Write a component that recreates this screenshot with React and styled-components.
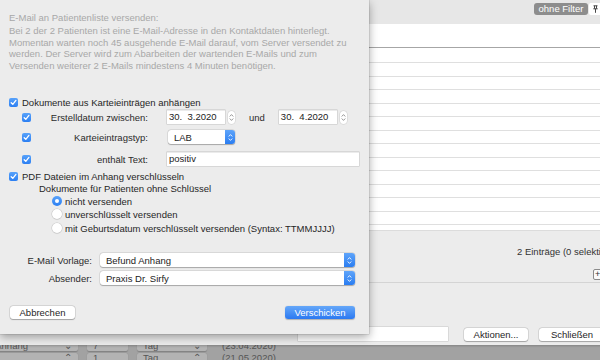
import React from 'react'
import styled, { createGlobalStyle } from 'styled-components'

const GlobalStyle = createGlobalStyle`
    html, body {
        margin: 0;
        padding: 0;
    }
    body {
        font-family: "Liberation Sans", Arial, sans-serif;
        font-size: 9.5px;
        color: #262626;
        background: #a2a2a2;
    }
`;

const Screen = styled.div`
    position: relative;
    width: 600px;
    height: 360px;
    overflow: hidden;
    background: #a2a2a2;
    display: flex;
    flex-direction: column;
`;

/* ---------- window behind the sheet ---------- */
const Window = styled.div`
    width: 640px;
    height: 345px;
    flex: none;
    background: #ececec;
    display: flex;
    flex-direction: column;
    box-shadow: 0 1px 2px rgba(0,0,0,0.2);
    position: relative;
    z-index: 1;
`;
const Toolbar = styled.div`
    height: 24px;
    flex: none;
    box-sizing: border-box;
    padding: 3px 0 0 534px;
    display: flex;
    align-items: flex-start;
    background: #e7e7e7;
`;
const FilterPill = styled.div`
    width: 54px;
    height: 12px;
    border-radius: 3px;
    background: #8d8d8d;
    color: #fff;
    line-height: 12px;
    text-align: center;
    margin-right: 1px;
`;
const PinButton = styled.div`
    width: 20px;
    height: 12px;
    border-radius: 2px;
    background: #fff;
    display: flex;
    align-items: center;
    padding-left: 4px;
    box-sizing: border-box;
`;
const Table = styled.div`
    height: 206px;
    flex: none;
    overflow: hidden;
    background: #fff;
    display: flex;
    flex-direction: column;
`;
const TableHead = styled.div`
    height: 24px;
    flex: none;
    box-sizing: border-box;
    border-bottom: 1px solid #a6a6a6;
`;
const TableRow = styled.div`
    height: ${({first}) => first ? 15 : 13.5}px;
    flex: none;
    box-sizing: border-box;
    border-bottom: 1px solid #dfdfdf;
`;
const StatusArea = styled.div`
    height: 53px;
    flex: none;
    box-sizing: border-box;
    border-top: 1px solid #dcdcdc;
    border-bottom: 1px solid #d4d4d4;
    padding: 15px 0 0 517px;
    display: flex;
    flex-direction: column;
    align-items: flex-start;
`;
const StatusText = styled.div`
    line-height: 11px;
    white-space: nowrap;
    color: #333;
`;
const PlusButton = styled.div`
    margin: 12px 0 0 76px;
    width: 14px;
    height: 9px;
    border: 1px solid #8a8a8a;
    border-radius: 2px;
    background: #fafafa;
    font-size: 9px;
    line-height: 9px;
    padding-left: 1px;
    color: #333;
`;
const ButtonBar = styled.div`
    flex: 1;
    display: flex;
    align-items: flex-end;
    padding: 0 0 4px 298px;
`;
const SearchField = styled.div`
    width: 150px;
    height: 14px;
    background: #fff;
    box-shadow: 0 0 0 0.5px #c6c6c6;
`;
const PushButton = styled.div`
    width: ${({w}) => w}px;
    height: 13px;
    margin-left: ${({gap}) => gap}px;
    border-radius: 3px;
    box-sizing: border-box;
    display: flex;
    align-items: center;
    justify-content: center;
    color: ${({primary}) => primary ? '#fff' : '#262626'};
    background: ${({primary}) => primary ? 'linear-gradient(#65a7f9, #2b79f1)' : '#fff'};
    box-shadow: ${({primary}) => primary ? '0 0.5px 1px rgba(0,0,0,0.25)' : '0 0 0 0.5px rgba(0,0,0,0.15), 0 0.5px 1px rgba(0,0,0,0.25)'};
    white-space: nowrap;
`;

/* ---------- window further below ---------- */
const LowerWindow = styled.div`
    flex: 1;
    display: flex;
    flex-direction: column;
    gap: 2px;
    margin-top: -4px;
    margin-left: -43px;
    overflow: hidden;
`;
const LowerRow = styled.div`
    display: flex;
    gap: 9px;
    height: 10px;
    flex: none;
`;
const LowerField = styled.div`
    width: ${({w}) => w}px;
    height: 10px;
    border-radius: 2px;
    background: ${({plain}) => plain ? 'transparent' : '#b3b3b3'};
    box-shadow: ${({plain}) => plain ? 'none' : '0 0.5px 1px rgba(0,0,0,0.2)'};
    color: #555;
    line-height: 10px;
    padding: 0 6px;
    box-sizing: border-box;
    white-space: nowrap;
    display: flex;
    justify-content: space-between;
`;

/* ---------- sheet ---------- */
const Sheet = styled.div`
    position: absolute;
    z-index: 2;
    top: 0;
    left: 0;
    width: 369px;
    height: 334px;
    box-sizing: border-box;
    padding: 12px 14px 0 9px;
    background: #ececec;
    box-shadow: 0 3px 9px rgba(0,0,0,0.35), 0 0 0 0.5px rgba(0,0,0,0.15);
    display: flex;
    flex-direction: column;
`;
const Info = styled.div`
    color: #a8a8a8;
    line-height: 11.4px;
    white-space: nowrap;
`;
const InfoTitle = styled.div`
    margin-bottom: 2px;
`;
const Row = styled.div`
    display: flex;
    align-items: center;
    flex: none;
    height: ${({h}) => h || 12}px;
    margin-top: ${({mt}) => mt || 0}px;
    padding-left: ${({indent}) => indent || 0}px;
    white-space: nowrap;
`;
const CheckBox = styled.span`
    width: 9px;
    height: 9px;
    flex: none;
    border-radius: 2px;
    background: linear-gradient(#58a2fa, #2c7ff2);
    display: flex;
    align-items: center;
    justify-content: center;
    margin-right: ${({gap}) => gap || 4}px;
`;
const Label = styled.span`
    width: ${({w}) => w}px;
    flex: none;
    text-align: right;
    color: #2b2b2b;
`;
const Field = styled.div`
    width: ${({w}) => w}px;
    height: 14px;
    margin-left: ${({ml}) => ml || 0}px;
    flex: none;
    box-sizing: border-box;
    padding-left: 2px;
    background: #fff;
    box-shadow: 0 0 0 0.5px #c2c2c2, inset 0 0.5px 0 #d8d8d8;
    line-height: 14px;
    color: #1c1c1c;
    white-space: pre;
`;
const Stepper = styled.div`
    width: 7px;
    height: 13px;
    margin-left: ${({ml}) => ml}px;
    flex: none;
    border-radius: 4px;
    background: #fff;
    box-shadow: 0 0 0 0.5px #cdcdcd;
    display: flex;
    align-items: center;
    justify-content: center;
`;
const Conj = styled.span`
    margin-left: 14px;
    color: #2b2b2b;
`;
const Popup = styled.div`
    width: ${({w}) => w}px;
    height: 14px;
    margin-left: ${({ml}) => ml || 0}px;
    flex: none;
    border-radius: 3px;
    background: #fff;
    box-shadow: 0 0 0 0.5px rgba(0,0,0,0.12), 0 0.5px 1px rgba(0,0,0,0.25);
    display: flex;
    align-items: center;
    overflow: hidden;
    color: #1c1c1c;
`;
const PopupText = styled.span`
    flex: 1;
    padding-left: ${({pad}) => pad || 6}px;
`;
const PopupArrows = styled.span`
    width: ${({w}) => w || 10}px;
    height: 14px;
    flex: none;
    background: linear-gradient(#5ea4fa, #2a7df1);
    display: flex;
    align-items: center;
    justify-content: center;
`;
const Radio = styled.span`
    width: 10px;
    height: 10px;
    flex: none;
    box-sizing: border-box;
    border-radius: 50%;
    margin-right: 3px;
    display: flex;
    align-items: center;
    justify-content: center;
    background: ${({checked}) => checked ? 'linear-gradient(#5aa3fa, #2b7ff2)' : '#fff'};
    box-shadow: ${({checked}) => checked ? 'none' : '0 0 0 0.5px #c4c4c4, 0 0.5px 1px rgba(0,0,0,0.15)'};
`;
const RadioDot = styled.span`
    width: 4px;
    height: 4px;
    border-radius: 50%;
    background: #fff;
`;
const Footer = styled.div`
    display: flex;
    justify-content: space-between;
    margin-top: 21px;
    padding-left: 1px;
`;

const Check = () => (
    <svg width="7" height="7" viewBox="0 0 7 7">
        <path d="M1.2 3.7 L2.8 5.3 L5.9 1.4" fill="none" stroke="#fff" strokeWidth="1.3" strokeLinecap="round" strokeLinejoin="round" />
    </svg>
)

const Arrows = ({color = '#fff'}) => (
    <svg width="5" height="9" viewBox="0 0 5 9">
        <path d="M1 3.2 L2.5 1.6 L4 3.2 M1 5.8 L2.5 7.4 L4 5.8" fill="none" stroke={color} strokeWidth="0.9" strokeLinecap="round" strokeLinejoin="round" />
    </svg>
)

const Pin = () => (
    <svg width="5" height="8" viewBox="0 0 5 8">
        <path d="M0.5 0.8 H4.5 M1.5 0.8 V3.6 M3.5 0.8 V3.6 M0.3 3.8 H4.7 M2.5 3.8 V7.8" fill="none" stroke="#333" strokeWidth="0.9" />
    </svg>
)

const CheckRow = ({label, children, mt, h}) => (
    <Row indent={13} mt={mt} h={h}>
        <CheckBox gap={0}><Check /></CheckBox>
        <Label w={113}>{label}</Label>
        {children}
    </Row>
)

const DateField = ({value, ml}) => (
    <>
        <Field w={58} ml={ml}>{value}</Field>
        <Stepper ml={3}><Arrows color="#8a8a8a" /></Stepper>
    </>
)

const SelectBox = ({value, w, ml, arrowW}) => (
    <Popup w={w} ml={ml}>
        <PopupText>{value}</PopupText>
        <PopupArrows w={arrowW}><Arrows /></PopupArrows>
    </Popup>
)

const rows = Array.from({length: 13})

export default function App() {
    return (
        <Screen>
            <GlobalStyle />
            <Window>
                <Toolbar>
                    <FilterPill>ohne Filter</FilterPill>
                    <PinButton><Pin /></PinButton>
                </Toolbar>
                <Table>
                    <TableHead />
                    {rows.map((_, i) => <TableRow key={i} first={i === 0} />)}
                </Table>
                <StatusArea>
                    <StatusText>2 Einträge (0 selektiert)</StatusText>
                    <PlusButton>+</PlusButton>
                </StatusArea>
                <ButtonBar>
                    <SearchField />
                    <PushButton w={64} gap={16}>Aktionen...</PushButton>
                    <PushButton w={66} gap={11}>Schließen</PushButton>
                </ButtonBar>
            </Window>
            <LowerWindow>
                <LowerRow>
                    <LowerField w={121}><span>Befund Anhang</span><span>⌄</span></LowerField>
                    <LowerField w={41}>7</LowerField>
                    <LowerField w={70}><span>Tag</span><span>⌄</span></LowerField>
                    <LowerField w={80} plain>(23.04.2020)</LowerField>
                </LowerRow>
                <LowerRow>
                    <LowerField w={121}><span>Ende</span><span>⌃</span></LowerField>
                    <LowerField w={41}>1</LowerField>
                    <LowerField w={70}><span>Tag</span><span>⌃</span></LowerField>
                    <LowerField w={80} plain>(21.05.2020)</LowerField>
                </LowerRow>
            </LowerWindow>

            <Sheet>
                <Info>
                    <InfoTitle>E-Mail an Patientenliste versenden:</InfoTitle>
                    <div>Bei 2 der 2 Patienten ist eine E-Mail-Adresse in den Kontaktdaten hinterlegt.</div>
                    <div>Momentan warten noch 45 ausgehende E-Mail darauf, vom Server versendet zu</div>
                    <div>werden. Der Server wird zum Abarbeiten der wartenden E-Mails und zum</div>
                    <div>Versenden weiterer 2 E-Mails mindestens 4 Minuten benötigen.</div>
                </Info>

                <Row mt={25}>
                    <CheckBox><Check /></CheckBox>
                    Dokumente aus Karteieinträgen anhängen
                </Row>
                <CheckRow label="Erstelldatum zwischen:" mt={2} h={14}>
                    <DateField value="30.  3.2020" ml={19} />
                    <Conj>und</Conj>
                    <DateField value="30.  4.2020" ml={14} />
                </CheckRow>
                <CheckRow label="Karteieintragstyp:" mt={6} h={14}>
                    <SelectBox value="LAB" w={67} ml={20} />
                </CheckRow>
                <CheckRow label="enthält Text:" mt={8} h={14}>
                    <Field w={192} ml={19}>positiv</Field>
                </CheckRow>

                <Row mt={4}>
                    <CheckBox><Check /></CheckBox>
                    PDF Dateien im Anhang verschlüsseln
                </Row>
                <Row indent={30}>Dokumente für Patienten ohne Schlüssel</Row>
                <Row indent={43} mt={1}>
                    <Radio checked><RadioDot /></Radio>
                    nicht versenden
                </Row>
                <Row indent={43} mt={1}>
                    <Radio />
                    unverschlüsselt versenden
                </Row>
                <Row indent={43} mt={2}>
                    <Radio />
                    mit Geburtsdatum verschlüsselt versenden (Syntax: TTMMJJJJ)
                </Row>

                <Row mt={19} h={14}>
                    <Label w={83}>E-Mail Vorlage:</Label>
                    <SelectBox value="Befund Anhang" w={255} ml={8} arrowW={11} />
                </Row>
                <Row mt={4} h={14}>
                    <Label w={83}>Absender:</Label>
                    <SelectBox value="Praxis Dr. Sirfy" w={255} ml={8} arrowW={11} />
                </Row>

                <Footer>
                    <PushButton w={65} gap={0}>Abbrechen</PushButton>
                    <PushButton w={70} gap={0} primary>Verschicken</PushButton>
                </Footer>
            </Sheet>
        </Screen>
    )
}
